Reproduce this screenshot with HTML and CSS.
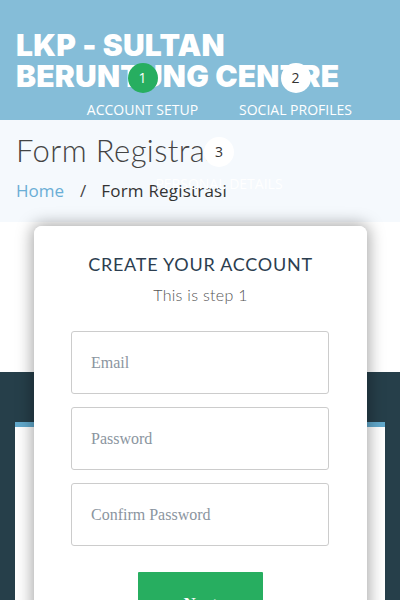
FILE: index.html
```html
<!DOCTYPE html>
<html lang="id">
<head>
<meta charset="utf-8">
<title>Form Registrasi</title>
<link rel="stylesheet" href="styles.css">
</head>
<body>
<header class="hero">
  <h1 class="hero-title">LKP - SULTAN<br>BERUNTUNG CENTRE</h1>
</header>
<section class="title-band">
  <h2 class="page-title">Form Registrasi</h2>
  <nav class="crumbs"><a class="crumb-link" href="#">Home</a><span class="crumb-sep">/</span><span class="crumb-current">Form Registrasi</span></nav>
</section>
<section class="spacer"></section>
<section class="dark-band">
  <div class="inner-box"></div>
</section>

<form class="msform">
  <ul class="progressbar">
    <li class="step active"><span class="step-num">1</span><span class="step-label">Account Setup</span></li><li class="step"><span class="step-num">2</span><span class="step-label">Social Profiles</span></li><li class="step"><span class="step-num">3</span><span class="step-label">Personal Details</span></li>
  </ul>
  <fieldset class="card">
    <h2 class="card-title">CREATE YOUR ACCOUNT</h2>
    <h3 class="card-sub">This is step 1</h3>
    <input class="field" type="text" placeholder="Email">
    <input class="field" type="password" placeholder="Password">
    <input class="field" type="password" placeholder="Confirm Password">
    <button type="button" class="btn-next">Next</button>
  </fieldset>
</form>
</body>
</html>
```

FILE: styles.css
```css
html, body {
  margin: 0;
  padding: 0;
}
body {
  width: 400px;
  height: 600px;
  overflow: hidden;
  position: relative;
  background: #ffffff;
  font-family: "Open Sans", sans-serif;
}
.hero {
  background: #85bdd8;
  height: 120px;
  box-sizing: border-box;
  padding: 30px 16px 0;
}
.hero-title {
  margin: 0;
  font-family: Inter, "Open Sans", sans-serif;
  font-weight: 900;
  font-size: 30px;
  line-height: 31px;
  color: #ffffff;
  letter-spacing: 0.2px;
}
.title-band {
  background: #f5f9fd;
  height: 102px;
  box-sizing: border-box;
  padding: 12px 16px 0;
}
.page-title {
  margin: 0;
  font-family: Lato, "Open Sans", sans-serif;
  font-weight: 300;
  font-size: 31px;
  line-height: 36px;
  color: #444444;
  letter-spacing: 0.4px;
}
.crumbs {
  margin-top: 11px;
  font-size: 17px;
  line-height: 24px;
  color: #333333;
}
.crumb-link {
  color: #6aaed6;
  text-decoration: none;
}
.crumb-sep {
  padding: 0 15px 0 16px;
  color: #444;
}
.crumb-current {
  letter-spacing: 0.2px;
}
.spacer {
  height: 150px;
}
.dark-band {
  background: #263f4a;
  height: 228px;
  padding: 50px 15px 0;
  box-sizing: border-box;
}
.inner-box {
  background: #ffffff;
  border-top: 5px solid #62a9cc;
  height: 200px;
}
.msform {
  position: absolute;
  top: 63px;
  left: 0;
  width: 400px;
  margin: 0;
}
.progressbar {
  list-style: none;
  margin: 0 0 0 66px;
  padding: 0;
  width: 306px;
  text-align: center;
  font-size: 0;
}
.step {
  display: inline-block;
  vertical-align: top;
  width: 153px;
  height: 74px;
  text-align: center;
}
.step-num {
  display: block;
  width: 30px;
  height: 30px;
  line-height: 30px;
  border-radius: 50%;
  margin: 0 auto 8px;
  background: #ffffff;
  color: #333333;
  font-size: 14px;
}
.step.active .step-num {
  background: #27ae60;
  color: #ffffff;
}
.step-label {
  display: block;
  font-size: 14px;
  line-height: 18px;
  color: #ffffff;
  text-transform: uppercase;
}
.card {
  position: absolute;
  top: 163px;
  left: 34px;
  width: 333px;
  height: 420px;
  box-sizing: border-box;
  margin: 0;
  border: 0;
  border-radius: 8px;
  background: #ffffff;
  box-shadow: 0 0 16px 2px rgba(0, 0, 0, 0.35);
  padding: 26px 37px 0;
  text-align: center;
}
.card-title {
  margin: 0;
  font-family: Lato, "Open Sans", sans-serif;
  font-weight: 400;
  font-size: 18px;
  line-height: 24px;
  color: #2c3e50;
  letter-spacing: 0.75px;
}
.card-sub {
  margin: 9px 0 0;
  font-family: Lato, "Open Sans", sans-serif;
  font-weight: 300;
  font-size: 16px;
  line-height: 20px;
  color: #555555;
  letter-spacing: 0.3px;
}
.field {
  display: block;
  width: 258px;
  height: 63px;
  box-sizing: border-box;
  margin: 0 0 13px;
  padding: 0 19px;
  border: 1px solid #cccccc;
  border-radius: 3px;
  font-family: "Liberation Serif", serif;
  font-size: 16px;
  color: #2c3e50;
  background: #ffffff;
}
.field:first-of-type {
  margin-top: 26px;
}
.field::placeholder {
  color: #8b95a0;
}
.btn-next {
  display: block;
  margin: 26px auto 0;
  width: 125px;
  height: 50px;
  border: 0;
  border-radius: 1px;
  background: #27ae60;
  color: #ffffff;
  font-family: "Liberation Serif", serif;
  font-weight: 700;
  font-size: 17px;
  padding: 14px 0 0;
  line-height: 20px;
  vertical-align: top;
}
```
